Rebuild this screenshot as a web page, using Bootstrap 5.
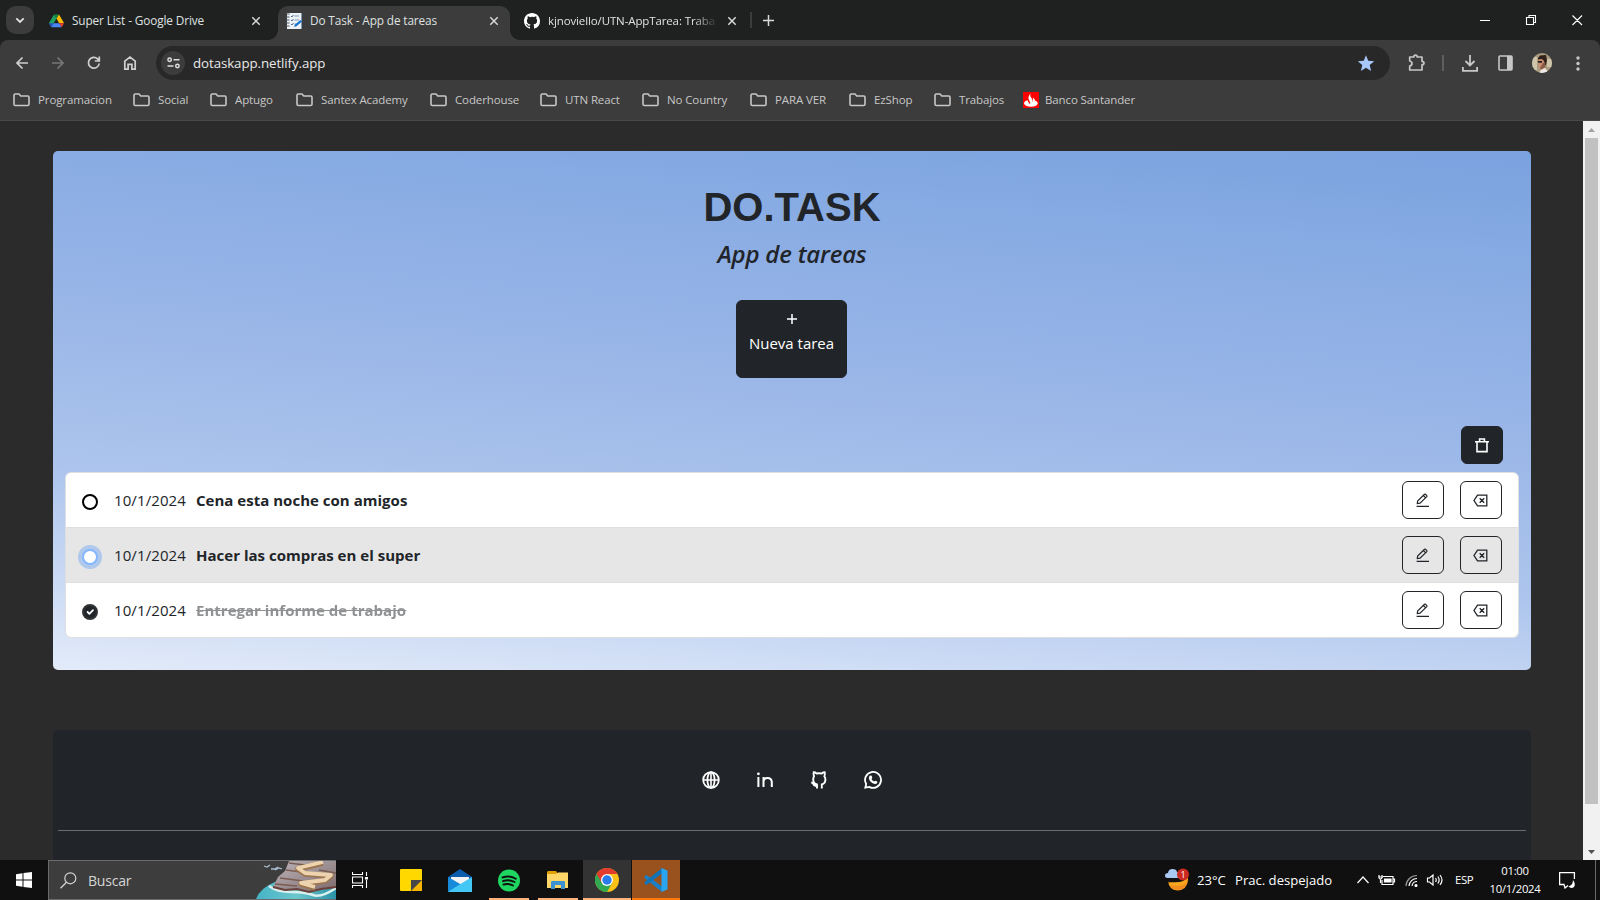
<!DOCTYPE html>
<html lang="es">
<head>
<meta charset="utf-8">
<title>Do Task - App de tareas</title>
<link href="https://cdn.jsdelivr.net/npm/bootstrap@5.3.0/dist/css/bootstrap.min.css" rel="stylesheet">
<style>
  :root { --ui: "Open Sans", "Noto Sans", sans-serif; }
  body { font-family: var(--ui); font-size: 15px; width: 1600px; height: 900px; background: #2b2b2b; color: #212529; }
  svg { display: block; flex: none; }
  .chrome-text { font-size: 11.5px; white-space: nowrap; letter-spacing: -.12px; }

  /* tab strip */
  .tabstrip { height: 40px; background: #1f2120; color: #dfe1e0; }
  .tabstrip .chrome-text { font-size: 11.8px; letter-spacing: -.12px; }
  .tab-search { width: 28px; height: 28px; border-radius: 10px; background: #3c3c3c; margin: 6px 9px 0 6px; }
  .tab-item { height: 34px; margin-top: 6px; padding-bottom: 5px; }
  .tab-first { width: 235px; padding-left: 6px; padding-right: 17px; }
  .tab-live { width: 232px; padding: 0 11px 5px 8px; background: #3c3c3c; border-radius: 10px 10px 0 0; position: relative; }
  .tab-live::before, .tab-live::after { content: ""; position: absolute; bottom: 0; width: 10px; height: 10px; }
  .tab-live::before { left: -10px; background: radial-gradient(circle at 0 0, #1f2120 9.6px, #3c3c3c 10.2px); }
  .tab-live::after { right: -10px; background: radial-gradient(circle at 100% 0, #1f2120 9.6px, #3c3c3c 10.2px); }
  .tab-third { width: 240px; padding-left: 14px; padding-right: 13px; }
  .tab-fade { -webkit-mask-image: linear-gradient(90deg, #000 145px, transparent 170px); mask-image: linear-gradient(90deg, #000 145px, transparent 170px); }
  .tabstrip .tab-fade { font-size: 11.5px; letter-spacing: -.12px; }
  .tab-divider { width: 2px; height: 16px; background: #3c3c3c; margin-top: 12px; }

  /* toolbar */
  .toolbar-wrap { background: #1f2120; }
  .toolbar { height: 46px; background: #3c3c3c; border-radius: 8px 8px 0 0; padding: 6px 14px 6px 15px; color: #c7c7c7; }
  .omnibox { width: 1234px; height: 34px; border-radius: 17px; background: #282828; padding: 0 15px 0 5px; margin-left: 19px; color: #e8e8e8; }
  .site-chip { width: 24px; height: 24px; border-radius: 50%; background: #3c3c3c; }
  .omnibox-url { font-size: 13.300px; margin-left: 8px; letter-spacing: -.08px; padding-top: 1px; }
  .bookmarks { height: 35px; background: #3c3c3c; border-bottom: 1px solid #494949; padding: 0 0 7px 13px; color: #c7c7c7; }
  .bookmarks .bm { flex: none; gap: 8px; }
  .bookmarks .bm:last-child { gap: 6px; margin-left: 1px; }

  /* web page */
  .viewport { height: 739px; overflow: hidden; background: #2b2b2b; }
  .page-area { width: 1583px; padding: 30px 52px 0 53px; }
  .task-panel { height: 519px; border-radius: 5px; padding: 35px 12px 0; background: linear-gradient(5deg, #e3ebf9 0%, #c5d6f3 17%, #adc5ed 31%, #98b5e7 58%, #89ace4 80%, #7aa2de 100%); }
  .brand-title { font: bold 40px/48px "Liberation Sans", Arial, sans-serif; margin: -3px 0 2px; }
  .brand-sub { font-size: 24px; line-height: 32px; font-style: italic; font-weight: 600; letter-spacing: -.2px; margin: 7px 0 30px; }
  .new-btn { width: 111px; height: 78px; padding: 6px 0; background: #212529; color: #fff; border: 1px solid #212529; border-radius: 6px; font-size: 15px; line-height: 24px; margin-right: 1px; }
  .icon-btn { width: 42px; height: 38px; padding: 0; border-radius: 6px; }
  .clear-row { margin: 48px 16px 8px 0; }
  .task-list .list-group-item { height: 55px; padding: 0 16px 0 15px; background: #fff; border-color: #dfdfe0; }
  .task-list .list-group-item:first-child { height: 56px; }
  .task-list .list-group-item.hovered { background: #e6e6e6; }
  .task-list .icon-btn { border: 1px solid #212529; background: transparent; color: #212529; }
  .task-list .icon-btn svg { margin-right: 1px; }
  .task-list .form-check-input { width: 16px; height: 16px; margin: 3px 0 0 1px; border: 2px solid #000; background-color: #fff; }
  .task-list .form-check-input.ringed { border-color: #86b7fe; box-shadow: 0 0 0 4px rgba(13,110,253,.25); }
  .task-list .form-check-input:checked { background-color: #212529; border: 2px solid #303236; }
  .task-date { width: 82px; margin-left: 16px; letter-spacing: .1px; }
  .task-name { font-weight: 700; letter-spacing: .02px; }
  .done { text-decoration: line-through; opacity: .5; }
  .foot-panel { margin-top: 60px; height: 160px; background: #212529; border-radius: 5px; padding: 41px 5px 0; color: #fff; }
  .foot-icons { gap: 36px; }
  .foot-rule { border-top: 1px solid #6a6d70; margin-top: 41px; }
  .scrollrail { width: 17px; height: 739px; background: #f1f1f1; padding: 7px 2px 6px; }
  .scrollthumb { width: 13px; height: 666px; background: #c1c1c1; margin-top: 6px; }

  /* taskbar */
  .taskbar { height: 40px; background: #101010; color: #fff; }
  .start { width: 48px; }
  .searchbox { width: 288px; height: 40px; background: #3d3d3d; border: 1px solid #6b6b6b; border-right: 0; padding-left: 11px; color: #d5d5d5; font-size: 14px; }
  .slot { width: 49px; height: 40px; display: flex; align-items: center; justify-content: center; flex: none; }
  .slot-views { width: 48px; margin-right: 3px; }
  .running { background: linear-gradient(#ffb47e, #ffb47e) center bottom / 40px 2px no-repeat; }
  .current { padding-right: 1px; background: linear-gradient(#ffb47e, #ffb47e) left bottom / 48px 2px no-repeat, linear-gradient(#333, #333) left / 48px 40px no-repeat; }
  .alerting { padding-right: 1px; background: linear-gradient(#ff7a0c, #ff7a0c) left bottom / 48px 2px no-repeat, linear-gradient(#99511d, #99511d) left / 48px 40px no-repeat; }
  .weather { font-size: 13.100px; white-space: nowrap; }
  .weather span { padding-top: 1px; }
  .clock { width: 64px; font-size: 11.300px; line-height: 18px; text-align: center; letter-spacing: -.3px; }
  .desk-edge { width: 5px; height: 40px; border-left: 1px solid #6a6a6a; }
</style>
</head>
<body class="overflow-hidden d-flex flex-column">
<svg width="0" height="0" class="position-absolute">
  <defs>
    <symbol id="folder" viewBox="0 0 17 14"><path d="M1 2.300Q1 1 2.300 1H6l1.800 2h7Q16 3 16 4.300V11.200Q16 12.500 14.700 12.500H2.300Q1 12.500 1 11.200Z" fill="none" stroke="#c7c7c7" stroke-width="1.600"/></symbol>
    <symbol id="cross" viewBox="0 0 10 10"><path d="M1.300 1.300 8.700 8.700M8.700 1.300 1.300 8.700" stroke="#d8d8d8" stroke-width="1.500"/></symbol>
    <symbol id="edit" viewBox="0 0 14 15"><path d="M1.300 10.500 1.600 8 8.500 1.300Q9 .900 9.500 1.300L10.800 2.600Q11.200 3.100 10.800 3.600L4 10.200ZM7.400 2.500 9.700 4.800M.6 13.400H13" fill="none" stroke="#212529" stroke-width="1.200"/></symbol>
    <symbol id="erase" viewBox="0 0 15 13"><path d="M4.500 1.200H13.800V11.800H4.500L1 6.500ZM6.700 4.200 11.200 8.800M11.200 4.200 6.700 8.800" fill="none" stroke="#212529" stroke-width="1.300"/></symbol>
  </defs>
</svg>

<div class="tabstrip d-flex flex-shrink-0">
  <div class="tab-search d-flex align-items-center justify-content-center"><svg width="10" height="7"><path d="M1.300 1.300 5 5 8.700 1.300" fill="none" stroke="#e2e2e2" stroke-width="1.800"/></svg></div>
  <div class="tab-item tab-first d-flex align-items-center">
    <svg width="15" height="14" viewBox="0 0 15 14"><path d="M5 .5 0 9 2.300 13 7.500 4.500Z" fill="#1ea362"/><path d="M5 .5H10L7.500 4.800Z" fill="#11863f"/><path d="M10 .5 15 9H10L7.500 4.500Z" fill="#ffba00"/><path d="M0 9.200 2.300 13.300 4.800 9.200Z" fill="#2556c6"/><path d="M2.300 13.300H12.700L10.200 9.200H4.800Z" fill="#4a87f5"/><path d="M12.700 13.300 15 9.200H10.200Z" fill="#ea4335"/></svg>
    <span class="chrome-text ms-2">Super List - Google Drive</span>
    <svg class="ms-auto" width="10" height="10"><use href="#cross"/></svg>
  </div>
  <div class="tab-item tab-live d-flex align-items-center">
    <svg width="16" height="16" viewBox="0 0 16 16"><path d="M1 0H16V16H1Z" fill="#eef1f4"/><path d="M0 1H3.500M0 4H3.500M0 7H3.500M0 10H3.500M0 13H3.500" stroke="#4a5a66" stroke-width="1.200"/><path d="M5 3 6 4 7.500 2M5 7 6 8 7.500 6M5 11 6 12 7.500 10" fill="none" stroke="#50718f"/><path d="M8.500 3H13M8.500 7H13M8.500 11H10M15.500 0V16" stroke="#7897b4"/><path d="M8 14 9 11.500 14.500 7 16 8.500 10.500 13.300Z" fill="#1672cf"/></svg>
    <span class="chrome-text ms-2">Do Task - App de tareas</span>
    <svg class="ms-auto" width="10" height="10"><use href="#cross"/></svg>
  </div>
  <div class="tab-item tab-third d-flex align-items-center">
    <svg width="16" height="16" viewBox="0 0 16 16"><path fill="#fff" d="M8 0C3.580 0 0 3.580 0 8c0 3.540 2.290 6.530 5.470 7.590.4.070.55-.17.55-.38 0-.19-.01-.82-.01-1.490-2.010.37-2.530-.49-2.690-.94-.09-.23-.48-.94-.82-1.130-.28-.15-.68-.52-.01-.53.63-.01 1.080.58 1.230.82.72 1.210 1.870.87 2.330.66.07-.52.28-.87.51-1.070-1.780-.2-3.640-.89-3.640-3.950 0-.87.31-1.590.82-2.150-.08-.2-.36-1.020.08-2.120 0 0 .67-.21 2.200.82A7.600 7.600 0 0 1 8 3.860c.68 0 1.360.09 2 .27 1.530-1.040 2.200-.82 2.200-.82.44 1.100.16 1.920.08 2.120.51.56.82 1.270.82 2.150 0 3.070-1.870 3.750-3.650 3.950.29.25.54.73.54 1.480 0 1.070-.01 1.930-.01 2.200 0 .21.15.46.55.38A8.010 8.010 0 0 0 16 8c0-4.420-3.580-8-8-8z"/></svg>
    <span class="chrome-text tab-fade ms-2">kjnoviello/UTN-AppTarea: Traba</span>
    <svg class="ms-auto" width="10" height="10"><use href="#cross"/></svg>
  </div>
  <div class="tab-divider"></div>
  <svg style="margin:15px 0 0 11px" width="11" height="11"><path d="M5.500 0V11M0 5.500H11" stroke="#dadada" stroke-width="1.500"/></svg>
  <svg class="ms-auto" style="margin:15px 17px 0 0" width="103" height="11" viewBox="0 0 103 11"><path d="M0 5.500H10M49 2.500V.5H55.500V7.500H53.500M46.500 2.500H53.500V9.500H46.500ZM92.500.5 102 10M102 .5 92.500 10" fill="none" stroke="#fff" stroke-width="1.100"/></svg>
</div>

<div class="toolbar-wrap">
  <div class="toolbar d-flex align-items-center">
    <svg width="122" height="16" viewBox="0 0 122 16" fill="none" stroke-width="1.700">
      <path d="M13 8H2M7.500 2.500 2 8 7.500 13.500" stroke="#d0d0d0"/><path d="M37 8H48M42.500 2.500 48 8 42.500 13.500" stroke="#777"/>
      <path d="M84.200 8.500A5.400 5.400 0 1 1 82.500 3.800L84 5.300M84.300 1.500V6H79.800" stroke="#d0d0d0"/>
      <path d="M109.800 6.200 115 2 120.200 6.200V14.200H116.900V9.300H113.100V14.200H109.800Z" stroke="#d0d0d0"/>
    </svg>
    <div class="omnibox d-flex align-items-center">
      <div class="site-chip d-flex align-items-center justify-content-center"><svg width="13" height="12" viewBox="0 0 13 12" fill="none" stroke="#dedede" stroke-width="1.500"><circle cx="2.600" cy="2.700" r="1.700"/><path d="M6.500 2.700H12.500M.5 9H6.500"/><circle cx="10.400" cy="9" r="1.700"/></svg></div>
      <span class="omnibox-url">dotaskapp.netlify.app</span>
      <svg class="ms-auto" width="18" height="17" viewBox="0 0 18 17"><path fill="#a8c7fa" d="M9 .2 11.200 5.700 17.200 6.200 12.700 10.100 14.100 15.900 9 12.800 3.900 15.900 5.300 10.100.8 6.200 6.800 5.700Z"/></svg>
    </div>
    <svg style="margin-left:18px" width="17" height="18" viewBox="0 0 17 18"><path d="M1.700 3H5.800Q5.800 1.200 7.500 1.200T9.200 3H14V7.300Q16 7.300 16 9T14 10.700V16H1.700V12Q4 11.500 4 9.500T1.700 7Z" fill="none" stroke="#c7c7c7" stroke-width="1.700" stroke-linejoin="round"/></svg>
    <div style="width:2px;height:16px;background:#5e5e5e;margin-left:17px"></div>
    <svg style="margin-left:18px" width="16" height="17" viewBox="0 0 16 17"><path d="M8 0V10M3.500 6 8 10.500 12.500 6M.9 12V15.800H15.100V12" fill="none" stroke="#c7c7c7" stroke-width="1.800"/></svg>
    <svg style="margin-left:20px" width="15" height="16" viewBox="0 0 15 16"><path d="M1 2Q1 1 2 1H13Q14 1 14 2V14Q14 15 13 15H2Q1 15 1 14Z" fill="none" stroke="#c7c7c7" stroke-width="1.600"/><path d="M9 1H14V15H9Z" fill="#c7c7c7"/></svg>
    <svg style="margin-left:19px" width="20" height="20" viewBox="0 0 20 20"><clipPath id="face"><circle cx="10" cy="10" r="10"/></clipPath><g clip-path="url(#face)"><path fill="#a99c80" d="M0 0H20V20H0Z"/><path fill="#cfc5a8" d="M0 4H5V17H0ZM15 6H20V14H15Z"/><path fill="#c88f72" d="M6 6H13V15L9 17 6.500 14Z"/><path fill="#30211a" d="M6 5 8 2.500 14 2 15 7 14 12 12.500 12 12 8 10 6 6 6.500Z"/><path fill="#251d1f" d="M5.500 8H10V9.800H6.500Z"/><path fill="#8a5a45" d="M11 10 13 9 13.500 14 9 16.500 8 15Z"/><path fill="#eee8e5" d="M7 20 9 17 13 15 17 20Z"/></g></svg>
    <svg class="ms-auto" style="margin-right:6px" width="4" height="15" fill="#c7c7c7"><circle cx="2" cy="2" r="1.700"/><circle cx="2" cy="7.500" r="1.700"/><circle cx="2" cy="13" r="1.700"/></svg>
  </div>
</div>
<div class="bookmarks d-flex align-items-center chrome-text flex-shrink-0">
  <div class="bm d-flex align-items-center" style="width:120px"><svg width="17" height="14"><use href="#folder"/></svg>Programacion</div>
  <div class="bm d-flex align-items-center" style="width:77px"><svg width="17" height="14"><use href="#folder"/></svg>Social</div>
  <div class="bm d-flex align-items-center" style="width:86px"><svg width="17" height="14"><use href="#folder"/></svg>Aptugo</div>
  <div class="bm d-flex align-items-center" style="width:134px"><svg width="17" height="14"><use href="#folder"/></svg>Santex Academy</div>
  <div class="bm d-flex align-items-center" style="width:110px"><svg width="17" height="14"><use href="#folder"/></svg>Coderhouse</div>
  <div class="bm d-flex align-items-center" style="width:102px"><svg width="17" height="14"><use href="#folder"/></svg>UTN React</div>
  <div class="bm d-flex align-items-center" style="width:108px"><svg width="17" height="14"><use href="#folder"/></svg>No Country</div>
  <div class="bm d-flex align-items-center" style="width:99px"><svg width="17" height="14"><use href="#folder"/></svg>PARA VER</div>
  <div class="bm d-flex align-items-center" style="width:85px"><svg width="17" height="14"><use href="#folder"/></svg>EzShop</div>
  <div class="bm d-flex align-items-center" style="width:88px"><svg width="17" height="14"><use href="#folder"/></svg>Trabajos</div>
  <div class="bm d-flex align-items-center"><svg width="16" height="16" viewBox="0 0 16 16"><path fill="#f00" d="M0 0H16V16H0Z"/><path fill="#fff" d="M7.500 1.500Q6.500 3.500 8.500 6T9.500 10.500Q10.700 8.500 9.800 5.500 12 7 12 8.500 15 9.500 14.800 11.500 13.500 14.700 8 14.700T1 11.500Q1 9.300 4.600 8.300 4.600 10 7 12.300 7.700 11 6 8T7.500 1.500Z"/></svg>Banco Santander</div>
</div>

<div class="viewport d-flex flex-shrink-0">
  <main class="page-area">
    <section class="task-panel">
      <h1 class="brand-title text-center">DO.TASK</h1>
      <h4 class="brand-sub text-center">App de tareas</h4>
      <div class="d-flex justify-content-center">
        <button class="new-btn d-flex flex-column align-items-center">
          <svg style="margin:6px 0" width="12" height="12"><path d="M6 1V11M1 6H11" stroke="#fff" stroke-width="1.500"/></svg>
          <span>Nueva tarea</span>
        </button>
      </div>
      <div class="clear-row d-flex justify-content-end">
        <button class="btn btn-dark icon-btn d-flex align-items-center justify-content-center"><svg width="14" height="15" viewBox="0 0 14 15"><path d="M0 3.700H14M2 3.700V13.600H12V3.700M4.600 3.500V1H9.400V3.500" fill="none" stroke="#fff" stroke-width="1.600"/></svg></button>
      </div>
      <ul class="list-group task-list">
        <li class="list-group-item d-flex align-items-center">
          <input class="form-check-input rounded-circle" type="checkbox"><span class="task-date">10/1/2024</span><span class="task-name">Cena esta noche con amigos</span>
          <div class="d-flex gap-3 ms-auto"><button class="btn icon-btn d-flex align-items-center justify-content-center"><svg width="14" height="15"><use href="#edit"/></svg></button><button class="btn icon-btn d-flex align-items-center justify-content-center"><svg width="15" height="13"><use href="#erase"/></svg></button></div>
        </li>
        <li class="list-group-item hovered d-flex align-items-center">
          <input class="form-check-input rounded-circle ringed" type="checkbox"><span class="task-date">10/1/2024</span><span class="task-name">Hacer las compras en el super</span>
          <div class="d-flex gap-3 ms-auto"><button class="btn icon-btn d-flex align-items-center justify-content-center"><svg width="14" height="15"><use href="#edit"/></svg></button><button class="btn icon-btn d-flex align-items-center justify-content-center"><svg width="15" height="13"><use href="#erase"/></svg></button></div>
        </li>
        <li class="list-group-item d-flex align-items-center">
          <input class="form-check-input rounded-circle" type="checkbox" checked><span class="task-date">10/1/2024</span><span class="task-name done">Entregar informe de trabajo</span>
          <div class="d-flex gap-3 ms-auto"><button class="btn icon-btn d-flex align-items-center justify-content-center"><svg width="14" height="15"><use href="#edit"/></svg></button><button class="btn icon-btn d-flex align-items-center justify-content-center"><svg width="15" height="13"><use href="#erase"/></svg></button></div>
        </li>
      </ul>
    </section>
    <footer class="foot-panel">
      <div class="foot-icons d-flex justify-content-center">
        <svg width="18" height="18" viewBox="0 0 18 18" fill="none" stroke="#fff" stroke-width="1.800"><circle cx="9" cy="9" r="7.800"/><ellipse cx="9" cy="9" rx="3.600" ry="7.800"/><path d="M9 1V17M1 9H17" stroke-width="1.600"/></svg>
        <svg width="18" height="18" viewBox="0 0 18 18"><path d="M2.400 6V16M7.500 16V6M7.500 11Q7.500 7 11.500 7T15.800 11V16" fill="none" stroke="#fff" stroke-width="2"/><circle cx="2.400" cy="2.800" r="1.400" fill="#fff"/></svg>
        <svg width="18" height="18" viewBox="0 0 18 18"><path d="M7 17.500V13.500Q3.200 12.500 3.200 8.500 3.200 6.500 4 5.300 3.200 3 3.700 1.300 5.200 1.300 6.700 2.500 9.200 2 11.700 2.500 13.200 1.300 14.700 1.300 15.200 3.500 14.400 5.300 15.400 6.500 15.400 8.500 15.400 12.500 11.800 13.500V17.500M1.200 11.500Q3 11.700 3.500 13.300T7 15" fill="none" stroke="#fff" stroke-width="1.900"/></svg>
        <svg width="18" height="18" viewBox="0 0 18 18"><path d="M1.300 16.700 2.200 13A8 8 0 1 1 5.200 15.900Z" fill="none" stroke="#fff" stroke-width="1.800"/><path d="M6 4.500 7.600 4.800 8.300 6.800 7.500 8Q8.300 9.800 10 10.500L11.200 9.700 13.200 10.500 13.300 11.900Q12 13.300 10 12.800 6 11.500 5 7.800 4.700 5.500 6 4.500Z" fill="#fff"/></svg>
      </div>
      <div class="foot-rule"></div>
    </footer>
  </main>
  <div class="scrollrail d-flex flex-column align-items-center">
    <svg width="7" height="4"><path d="M0 4 3.500 0 7 4Z" fill="#a3a3a3"/></svg>
    <div class="scrollthumb"></div>
    <svg class="mt-auto" width="7" height="4"><path d="M0 0 3.500 4 7 0Z" fill="#505050"/></svg>
  </div>
</div>

<div class="taskbar d-flex align-items-center flex-shrink-0">
  <div class="start d-flex justify-content-center"><svg width="16" height="16" viewBox="0 0 16 16"><path fill="#fff" d="M0 2.300 6.500 1.300V7.500H0ZM7.500 1.100 16 0V7.500H7.500ZM0 8.500H6.500V14.700L0 13.700ZM7.500 8.500H16V16L7.500 14.900Z"/></svg></div>
  <div class="searchbox d-flex align-items-center">
    <svg width="17" height="17" viewBox="0 0 17 17"><circle cx="10.300" cy="6.300" r="5.500" fill="none" stroke="#d5d5d5" stroke-width="1.200"/><path d="M6.500 10.300.5 16.300" stroke="#d5d5d5" stroke-width="1.300"/></svg>
    <span style="margin-left:11px;padding-top:1px;letter-spacing:-.2px">Buscar</span>
    <svg class="ms-auto" width="81" height="38" viewBox="0 0 81 38">
      <defs><linearGradient id="sea" x1="0" x2="1"><stop offset="0" stop-color="#45b3c6"/><stop offset=".5" stop-color="#6cc6cc"/><stop offset="1" stop-color="#2c93a8"/></linearGradient><linearGradient id="rock" x1="0" y1="0" x2="1" y2="1"><stop offset="0" stop-color="#bdb6bb"/><stop offset="1" stop-color="#7c6a6c"/></linearGradient></defs>
      <path d="M1 38Q5 27 20 21L81 27V38Z" fill="url(#sea)"/>
      <path d="M14 25Q22 31 36 31T58 34 81 27" fill="none" stroke="#d8f0ee" stroke-width="2.500"/>
      <path d="M18 26 23 16 30 10 34 0H81V26L66 28 54 31 42 28 30 29Z" fill="url(#rock)"/>
      <path d="M18 26 30 29 42 28 54 31 66 28 81 26" fill="none" stroke="#6b4038" stroke-width="2"/>
      <path d="M31 9 46 11M25 17 48 20M20 23 42 25M34 2 50 4M64 9 81 12" stroke="#7b5c50" stroke-width="1.300" fill="none"/>
      <path d="M68 2 43 8 50 13 76 15 70 20 46 23 60 27" fill="none" stroke="#9c7551" stroke-width="5.500" stroke-linejoin="round"/>
      <path d="M68 1 43 7 50 12 76 14 70 19 46 22 60 26" fill="none" stroke="#edd4ae" stroke-width="3.800" stroke-linejoin="round"/>
      <path d="M9 5 12 6 15 4M16 8 20 8 23 6M20 9 24 7 27 8" fill="none" stroke="#a8bdd0" stroke-width="1.300"/>
    </svg>
  </div>
  <div class="slot slot-views"><svg width="16" height="16" viewBox="0 0 16 16" fill="none" stroke="#fff" stroke-width="1.100"><path d="M.5 0V2.500H10.500V0M.5 16V13.500H10.500V16M.5 5H10.500V11H.5ZM14.500 0V4M14.500 8V16"/><path fill="#fff" d="M13.500 5.500H15.500V7H13.500Z"/></svg></div>
  <div class="slot" style="width:48px"><svg width="22" height="22" viewBox="0 0 22 22"><path fill="#ffd800" d="M1 0H21Q22 0 22 1V21Q22 22 21 22H1Q0 22 0 21V1Q0 0 1 0Z"/><path fill="#f5b400" d="M11 22V11H22V21Q22 22 21 22Z"/><path fill="#474747" d="M11 22V11H22Z"/></svg></div>
  <div class="slot"><svg width="24" height="23" viewBox="0 0 24 23"><path fill="#0b5cab" d="M0 8 12 0 24 8V14H0Z"/><path fill="#f3f3f3" d="M3 8H21V16H3Z"/><path fill="#1b9de2" d="M0 8 24 22V23H1Q0 23 0 22Z"/><path fill="#43c8f5" d="M24 8 0 22.500 1 23H23Q24 23 24 22Z"/><path fill="#1378d0" d="M0 8V23L12 15Z" opacity=".5"/></svg></div>
  <div class="slot running"><svg width="22" height="23" viewBox="0 0 22 23"><circle cx="11" cy="11.500" r="11" fill="#1ed760"/><path d="M4.500 8.500Q11.500 6 17.800 9.700M5 12.200Q11 10 16.500 13M5.500 15.500Q10.500 14 15 16.500" fill="none" stroke="#101010" stroke-width="1.900" stroke-linecap="round"/></svg></div>
  <div class="slot running" style="margin-right:1px"><svg width="22" height="19" viewBox="0 0 22 19"><path fill="#e2a100" d="M1 0H9L11 3H0V1Z"/><path fill="#ffd768" d="M0 3 9 3 11 1.500H21V17H0Z"/><path fill="#3d93d2" d="M4 18V11Q4 10 5 10H17Q18 10 18 11V18H14V14H8V18Z"/></svg></div>
  <div class="slot current"><svg width="24" height="24" viewBox="0 0 24 24"><circle cx="12" cy="12" r="12" fill="#fbc116"/><path fill="#30a952" d="M1.600 6A12 12 0 0 0 12 24L17.200 15 12 12Z"/><path fill="#e33b2e" d="M1.600 6A12 12 0 0 1 22.400 6H12L6.800 15Z"/><circle cx="12" cy="12" r="6" fill="#fff"/><circle cx="12" cy="12" r="4.700" fill="#2a7cec"/></svg></div>
  <div class="slot alerting"><svg width="24" height="24" viewBox="0 0 24 24"><path d="M.5 8.500 2.500 7 18 18.500V24L.5 10Z" fill="#1b80c6"/><path d="M.5 15.500 2.500 17 18 5.500V0L.5 14Z" fill="#1173b8"/><path d="M17.500 0 23.500 2.500V21.500L17.500 24Z" fill="#2ba5f0"/></svg></div>

  <div class="weather d-flex align-items-center ms-auto">
    <svg width="25" height="24" viewBox="0 0 25 24"><path d="M3 13Q4 22 12.500 22.500 22 22 23 12V7Q21 16 3 14Z" fill="#f7a51d"/><path d="M4 17Q8 22 14 22 21 21 23 13Q19 20 4 17Z" fill="#f28b1f"/><path d="M2.500 10Q0 10 0 7.500T3 5Q3.500 1 7.500 1T12 4Q15 4 15 7T12 10Z" fill="#a9c9f2"/><circle cx="18" cy="6.500" r="6" fill="#cb2a20"/><text x="18" y="10" font-size="9" text-anchor="middle" fill="#fff">1</text></svg>
    <span style="width:38px;margin-left:7px">23°C</span><span style="width:122px">Prac. despejado</span>
  </div>
  <svg width="87" height="18" viewBox="0 0 87 18" fill="none" stroke="#fff" stroke-width="1.200">
    <path d="M.5 12 6 6 11.500 12"/>
    <path d="M26 5.500H36V13.500H25V9M36 8H37.500V11H36"/><path fill="#fff" d="M27.500 8H34V11H27.500Z"/><path d="M22 4V6.500Q22 8 23.500 8T25 6.500V4M23.500 8V12M21.200 6H26"/>
    <path d="M49 15A11 11 0 0 1 60 4.500" stroke="#999"/><path d="M52 15A8 8 0 0 1 60 7.500M55 15A5 5 0 0 1 60 10.500"/><circle cx="59" cy="14.500" r="1" fill="#fff"/>
    <path d="M70.500 7H72.500L76 4V14L72.500 11H70.500ZM78.500 7Q80 9 78.500 11M80.800 5.500Q83.500 9 80.800 12.500M83 4Q87 9 83 14"/>
  </svg>
  <span class="chrome-text" style="width:28px;margin-left:11px;letter-spacing:-.5px">ESP</span>
  <div class="clock">01:00<br>10/1/2024</div>
  <svg style="margin-left:12px" width="17" height="18" viewBox="0 0 17 18"><path d="M9 14.500 6 17 5 13.500H.6V1.600H15.400V8" fill="none" stroke="#fff" stroke-width="1.300"/><path fill="#fff" d="M14 9Q17 13 15 16 12 18 9.500 15.500 14 14 14 9Z"/></svg>
  <div class="desk-edge" style="margin-left:19px"></div>
</div>
<script src="https://cdn.jsdelivr.net/npm/bootstrap@5.3.0/dist/js/bootstrap.bundle.min.js"></script>
</body>
</html>
